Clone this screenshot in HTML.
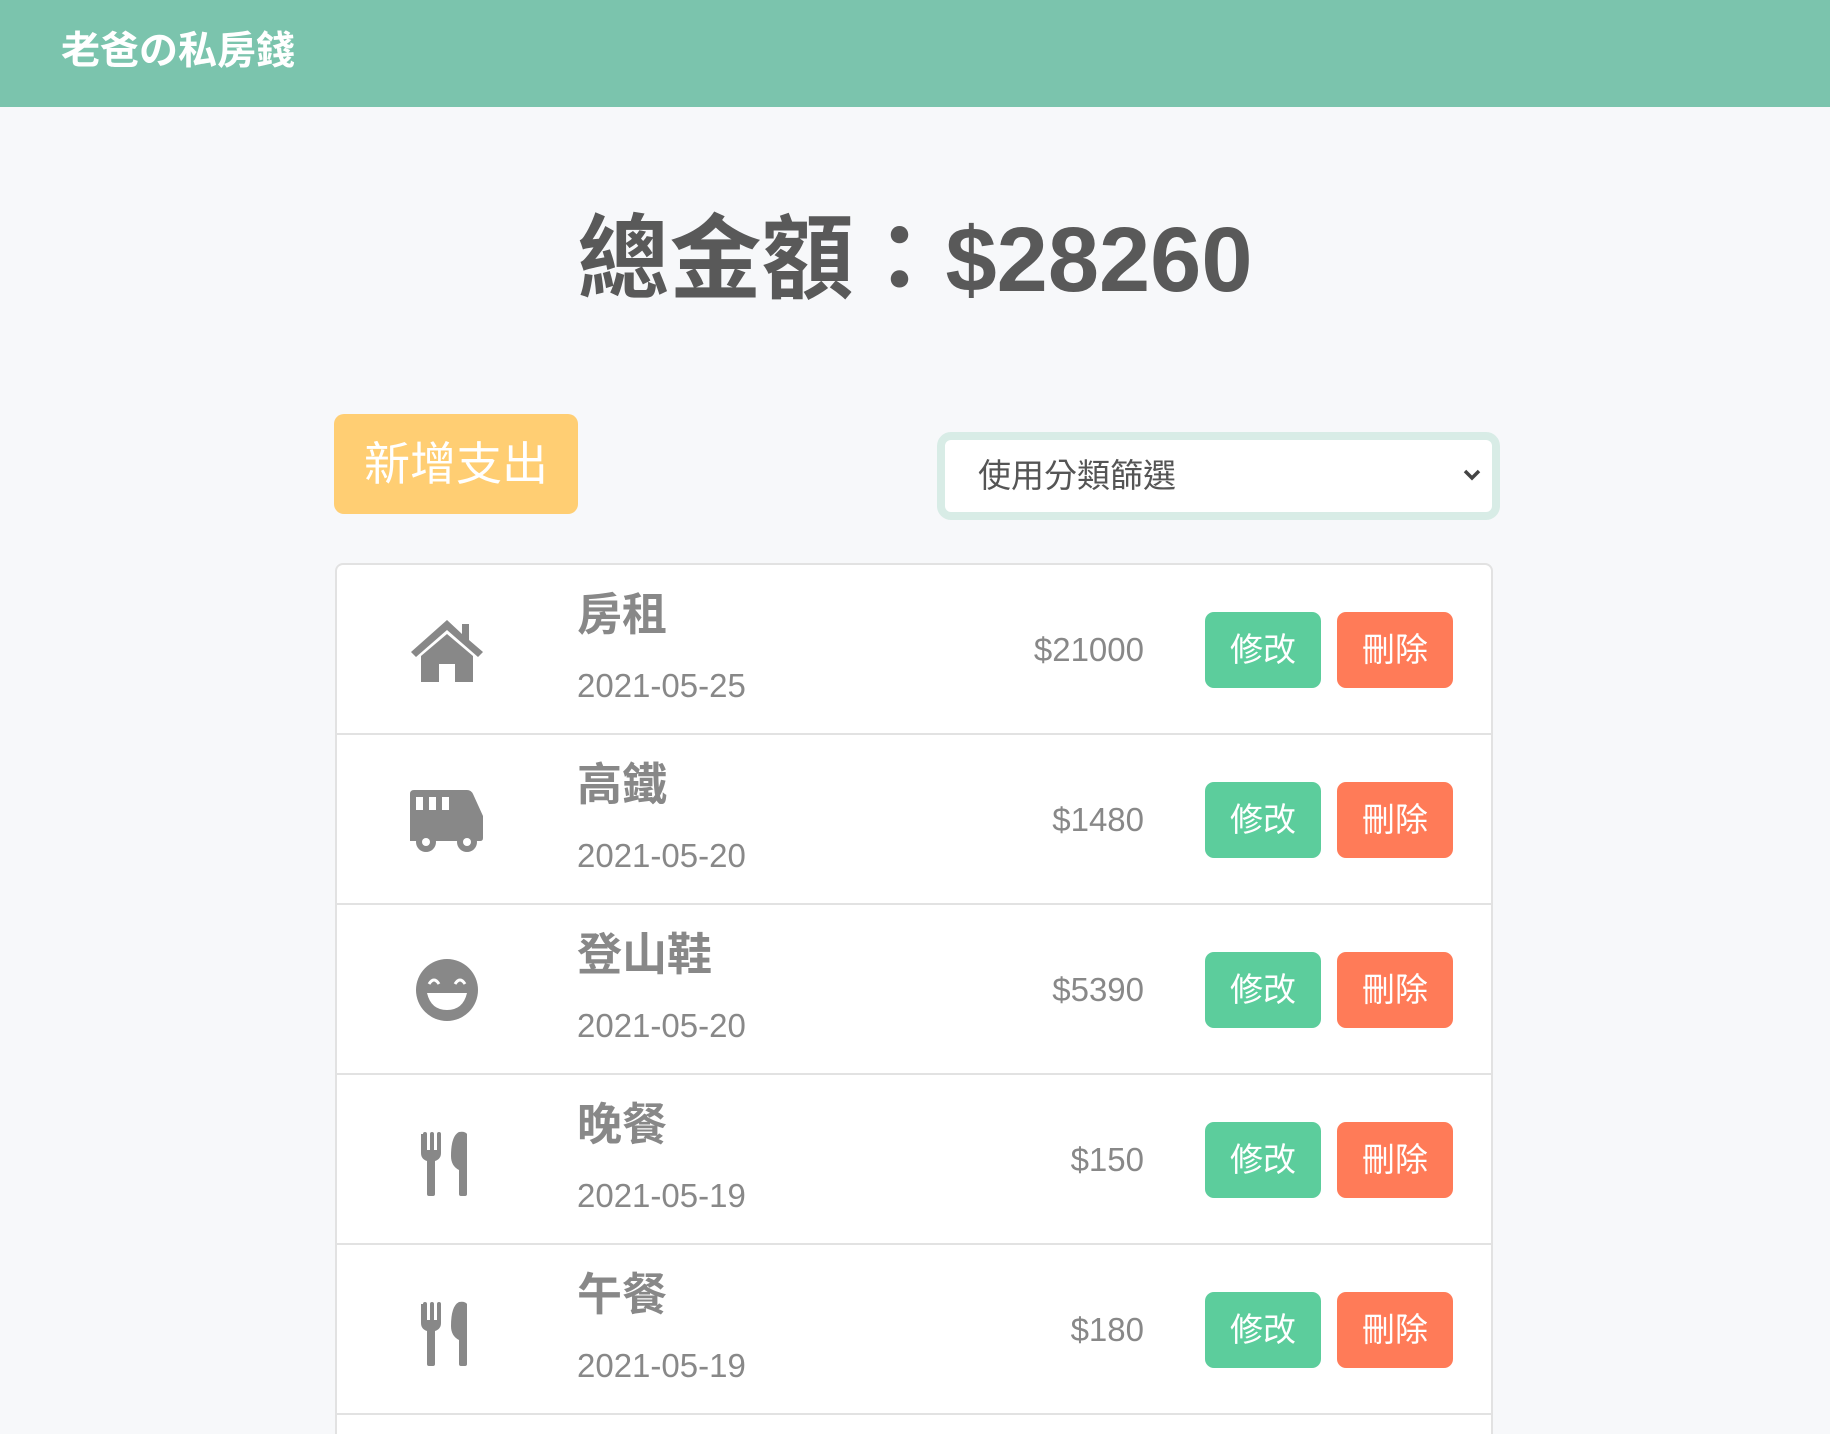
<!DOCTYPE html>
<html><head><meta charset="utf-8"><style>
*{margin:0;padding:0;box-sizing:border-box}
html{width:1830px;height:1434px;overflow:hidden}
body{width:1830px;height:1434px;overflow:hidden;background:#f7f8fa;font-family:"Liberation Sans","Noto Sans CJK TC",sans-serif;position:relative}
.hdr{position:absolute;left:0;top:0;width:1830px;height:107px;background:#7bc4ad}
.hdr span{position:absolute;left:61px;top:26px;font-size:39px;font-weight:bold;color:#fff;line-height:52px}
.total{position:absolute;left:0;width:1830px;top:200px;text-align:center;font-size:92px;font-weight:bold;color:#595959;line-height:120px}
.add{position:absolute;left:334px;top:414px;width:244px;height:100px;background:#ffce73;border-radius:10px;color:#fff;font-size:46px;line-height:100px;text-align:center}
.sel{position:absolute;left:937px;top:432px;width:563px;height:88px;border:8px solid #d8ece6;border-radius:14px;background:#fff}
.sel span{position:absolute;left:33px;top:0;line-height:72px;font-size:33px;color:#555}
.sel svg{position:absolute;right:10px;top:28px}
.list{position:absolute;left:335px;top:563px;width:1158px;height:871px;border:2px solid #e2e2e2;border-bottom:none;border-radius:8px 8px 0 0;background:#fff;overflow:hidden}
.row{position:absolute;left:0;width:1156px;height:170px;border-bottom:2px solid #e2e2e2}
.ic{position:absolute;left:70px;top:45px;width:80px;height:80px}
.t{position:absolute;left:240px;top:20px;font-size:45px;font-weight:bold;color:#888;line-height:60px}
.d{position:absolute;left:240px;top:101px;font-size:33px;color:#888;line-height:40px}
.a{position:absolute;right:349px;top:65px;font-size:33px;color:#888;line-height:40px}
.b{position:absolute;top:47px;width:116px;height:76px;border-radius:9px;color:#fff;font-size:33px;line-height:76px;text-align:center}
.e{left:868px;background:#5ccd9c}.x{left:1000px;background:#ff7b58}
</style></head><body>
<div class="hdr"><span>老爸の私房錢</span></div>
<div class="total">總金額：$28260</div>
<div class="add">新增支出</div>
<div class="sel"><span>使用分類篩選</span><svg width="20" height="14" viewBox="0 0 20 14"><path d="M3 3l7 7 7-7" stroke="#444" stroke-width="3.5" fill="none"/></svg></div>
<div class="list">
<div class="row" style="top:0">
<svg class="ic" viewBox="0 0 80 80"><path d="M40 10 L4 42 L9 47 L40 20 L71 47 L76 42 L62 30 L62 14 L55 14 L55 24Z" fill="#888"/><path d="M14 46 L40 24 L66 46 L66 72 L48 72 L48 54 L32 54 L32 72 L14 72Z" fill="#888"/></svg>
<div class="t">房租</div><div class="d">2021-05-25</div><div class="a">$21000</div><div class="b e">修改</div><div class="b x">刪除</div></div>
<div class="row" style="top:170px">
<svg class="ic" viewBox="0 0 80 80"><path d="M3 14 Q3 10 7 10 L60 10 Q64 10 66 14 L76 36 L76 58 Q76 61 73 61 L3 61Z" fill="#888"/><rect x="9" y="17" width="7" height="13" fill="#fff"/><rect x="22" y="17" width="7" height="13" fill="#fff"/><rect x="35" y="17" width="7" height="13" fill="#fff"/><circle cx="19" cy="62" r="10" fill="#888"/><circle cx="19" cy="62" r="4" fill="#fff"/><circle cx="60" cy="62" r="10" fill="#888"/><circle cx="60" cy="62" r="4" fill="#fff"/></svg>
<div class="t">高鐵</div><div class="d">2021-05-20</div><div class="a">$1480</div><div class="b e">修改</div><div class="b x">刪除</div></div>
<div class="row" style="top:340px">
<svg class="ic" viewBox="0 0 80 80"><circle cx="40" cy="40" r="31" fill="#888"/><path d="M22 34 Q27 26 32 34 M48 34 Q53 26 58 34" stroke="#fff" stroke-width="3" fill="none"/><path d="M20 43 L60 43 Q56 60 40 60 Q24 60 20 43Z" fill="#fff"/></svg>
<div class="t">登山鞋</div><div class="d">2021-05-20</div><div class="a">$5390</div><div class="b e">修改</div><div class="b x">刪除</div></div>
<div class="row" style="top:510px">
<svg class="ic" viewBox="0 0 80 80"><path d="M16 14 Q16 12 18 12 Q20 12 20 14 L20 30 L23 30 L23 14 Q23 12 25 12 Q27 12 27 14 L27 30 L30 30 L30 14 Q30 12 32 12 Q34 12 34 14 L34 33 Q34 39 28 41 L28 74 Q28 76 26 76 L22 76 Q20 76 20 74 L20 41 Q14 39 14 33 L14 14Z" fill="#888"/><path d="M52 12 Q58 11 60 14 L60 74 Q60 76 58 76 L54 76 Q52 76 52 74 L52 50 Q44 46 44 36 Q44 16 52 12Z" fill="#888"/></svg>
<div class="t">晚餐</div><div class="d">2021-05-19</div><div class="a">$150</div><div class="b e">修改</div><div class="b x">刪除</div></div>
<div class="row" style="top:680px">
<svg class="ic" viewBox="0 0 80 80"><path d="M16 14 Q16 12 18 12 Q20 12 20 14 L20 30 L23 30 L23 14 Q23 12 25 12 Q27 12 27 14 L27 30 L30 30 L30 14 Q30 12 32 12 Q34 12 34 14 L34 33 Q34 39 28 41 L28 74 Q28 76 26 76 L22 76 Q20 76 20 74 L20 41 Q14 39 14 33 L14 14Z" fill="#888"/><path d="M52 12 Q58 11 60 14 L60 74 Q60 76 58 76 L54 76 Q52 76 52 74 L52 50 Q44 46 44 36 Q44 16 52 12Z" fill="#888"/></svg>
<div class="t">午餐</div><div class="d">2021-05-19</div><div class="a">$180</div><div class="b e">修改</div><div class="b x">刪除</div></div>
</div>
</body></html>
